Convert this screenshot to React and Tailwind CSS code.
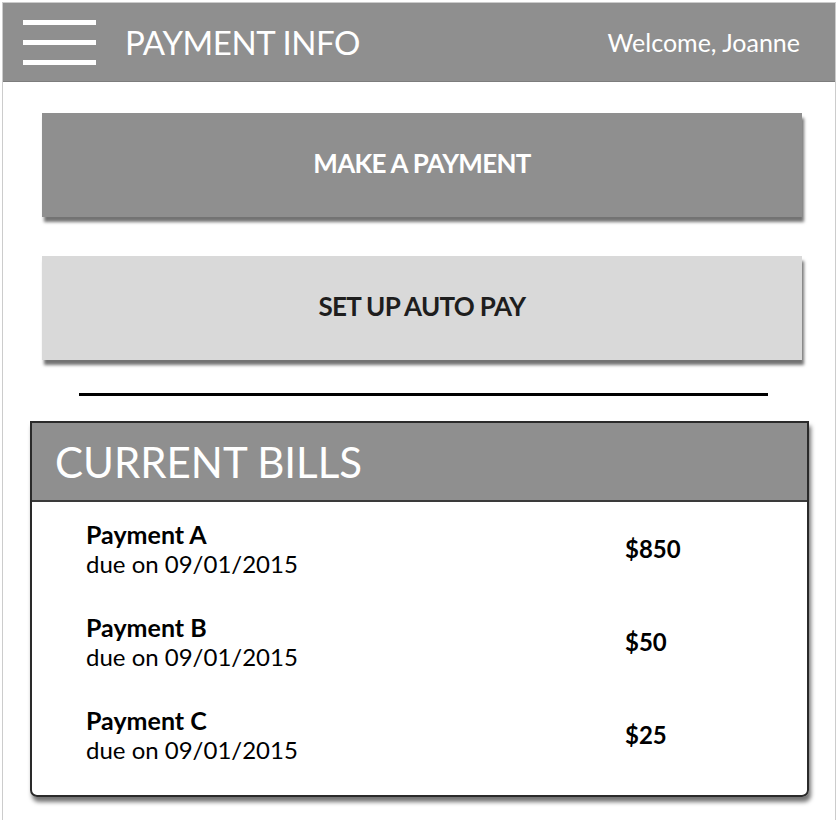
import React from 'react';

const bills = [
    { id: 'a', name: 'Payment A', due: '09/01/2015', amount: '$850' },
    { id: 'b', name: 'Payment B', due: '09/01/2015', amount: '$50' },
    { id: 'c', name: 'Payment C', due: '09/01/2015', amount: '$25' },
];

const App = () => {
    return (
        <div className="w-[840px] h-[820px] bg-white overflow-hidden pt-[2px] pl-[2px] font-['Lato','Noto_Sans',sans-serif]">
            <div className="w-[834px] h-[818px] border-l border-r border-t border-[#cccccc] flex flex-col">
                {/* top bar */}
                <div className="h-[79px] bg-[#8f8f8f] border-b border-[#7d7d7d] flex items-center pl-[20px] pr-[35px]">
                    <div className="flex flex-col gap-[15px] w-[73px]">
                        <span className="block h-[5px] bg-white" />
                        <span className="block h-[5px] bg-white" />
                        <span className="block h-[5px] bg-white" />
                    </div>
                    <h1 className="ml-[29px] text-[33px] tracking-[-0.4px] text-white leading-none">PAYMENT INFO</h1>
                    <span className="ml-auto text-[25px] text-white leading-none">Welcome, Joanne</span>
                </div>

                <div className="pl-[39px] pr-[32px] pt-[31px]">
                    <button className="w-[760px] h-[104px] pb-[4px] bg-[#8f8f8f] text-white font-bold text-[26px] tracking-[-0.7px] shadow-[2px_5px_3px_rgba(0,0,0,0.55)]">
                        MAKE A PAYMENT
                    </button>
                    <button className="mt-[39px] w-[760px] h-[104px] pb-[4px] bg-[#d9d9d9] text-[#1e1e1e] font-bold text-[26px] tracking-[-0.7px] shadow-[2px_5px_3px_rgba(0,0,0,0.55)]">
                        SET UP AUTO PAY
                    </button>
                </div>

                <div className="mt-[33px] ml-[76px] w-[689px] h-[3px] bg-black" />

                <div className="mt-[25px] ml-[27px] w-[779px] h-[376px] border-2 border-[#2a2a2a] rounded-b-[7px] shadow-[2px_5px_4px_rgba(0,0,0,0.55)] flex flex-col">
                    <div className="h-[79px] bg-[#8f8f8f] border-b-2 border-[#3a3a3a] flex items-center pl-[23px]">
                        <h2 className="text-[42px] text-white leading-none">CURRENT BILLS</h2>
                    </div>
                    <div className="pt-[17px] pl-[54px] flex flex-col gap-[33px]">
                        {bills.map(bill => (
                            <div key={bill.id} className="flex items-center">
                                <div className="w-[539px] text-black text-[24px] leading-[30px]">
                                    <div className="font-bold text-[25px]">{bill.name}</div>
                                    <div>due on {bill.due}</div>
                                </div>
                                <div className="text-black font-bold text-[24px]">{bill.amount}</div>
                            </div>
                        ))}
                    </div>
                </div>
            </div>
        </div>
    );
};

export default App;
